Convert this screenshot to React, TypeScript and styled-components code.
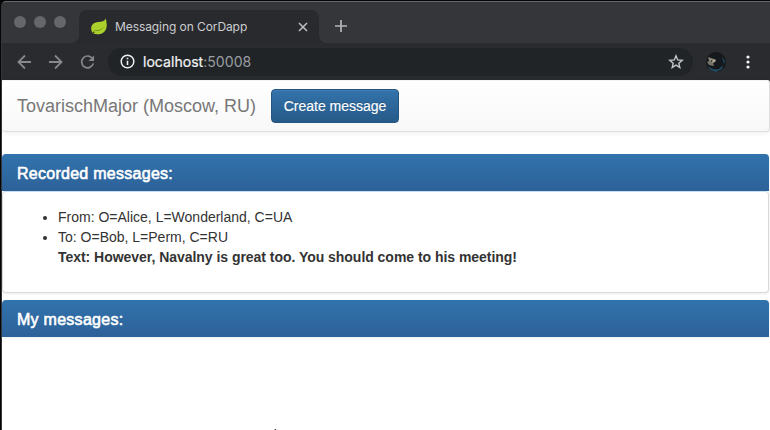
import React from "react";
import styled, { createGlobalStyle } from "styled-components";

const GlobalStyle = createGlobalStyle`
  * { box-sizing: border-box; }
  html, body { margin: 0; background: #000; overflow: hidden; }
  body { font-family: "Liberation Sans", Arial, sans-serif; }
`;

const Window = styled.div`
  height: 430px;
  padding: 1px 0 0 1px;
  background: #050506;
`;

const Frame = styled.div`
  height: 429px;
  display: flex;
  flex-direction: column;
  border-top: 1px solid #66676a;
  border-left: 1px solid #35363a;
  border-radius: 5px 0 0 0;
  background: #35363a;
  overflow: hidden;
`;

const TabStrip = styled.div`
  height: 41px;
  flex: none;
  display: flex;
  align-items: flex-start;
`;

const Lights = styled.div`
  display: flex;
  gap: 8px;
  padding: 14px 0 0 12px;
  width: 69px;
`;

const Light = styled.span`
  width: 12px;
  height: 12px;
  border-radius: 50%;
  background: #66676a;
`;

const Flare = styled.div<{ $side: "left" | "right" }>`
  width: 8px;
  height: 41px;
  background: radial-gradient(
    circle at ${(p) => (p.$side === "left" ? "0 33px" : "8px 33px")},
    #35363a 7.5px,
    #292a2d 8.5px
  );
  clip-path: inset(33px 0 0 0);
`;

const Tab = styled.div`
  width: 240px;
  height: 41px;
  margin-top: 8px;
  padding: 0 10px 8px 12px;
  display: flex;
  align-items: center;
  border-radius: 8px 8px 0 0;
  background: #292a2d;
`;

const TabTitle = styled.span`
  flex: 1;
  margin-left: 8px;
  font: 400 12px/18px Inter, Roboto, sans-serif;
  letter-spacing: -0.08px;
  color: #cbcdd0;
  white-space: nowrap;
`;

const NewTab = styled.div`
  margin: 17px 0 0 7px;
  display: flex;
`;

const Toolbar = styled.div`
  height: 37px;
  flex: none;
  display: flex;
  align-items: center;
  padding: 0 20px 0 14px;
  background: #292b2e;
`;

const NavIcons = styled.div`
  display: flex;
  gap: 17px;
  width: 92px;
`;

const AddressBar = styled.div`
  flex: 1;
  height: 28px;
  display: flex;
  align-items: center;
  padding: 0 9px 0 12px;
  border-radius: 14px;
  background: #202427;
`;

const Url = styled.span`
  flex: 1;
  margin-left: 8px;
  font: 400 14.1px/20px Inter, Roboto, sans-serif;
  color: #9a9da1;
`;

const Host = styled.span`
  color: #f1f3f4;
  -webkit-text-stroke: 0.2px #f1f3f4;
`;

const Actions = styled.div`
  display: flex;
  align-items: center;
  gap: 20px;
  margin-left: 13px;
`;

const Page = styled.main`
  flex: 1;
  min-height: 0;
  display: flex;
  flex-direction: column;
  margin-left: -1px;
  padding-left: 1px;
  background: #fff;
  border-radius: 2px 3px 0 0;
`;

const Navbar = styled.header`
  height: 52px;
  flex: none;
  display: flex;
  align-items: center;
  gap: 15px;
  padding: 0 15px;
  border: 1px solid #dedede;
  border-top-color: #f3f3f3;
  border-left: 0;
  border-radius: 4px;
  background: linear-gradient(#fff, #f8f8f8);
  box-shadow: 0 1px 5px rgba(0, 0, 0, 0.075);
`;

const Brand = styled.span`
  width: 239px;
  font-size: 18px;
  line-height: 20px;
  color: #777;
  white-space: nowrap;
`;

const CreateButton = styled.button`
  width: 128px;
  height: 34px;
  padding: 0;
  border: 1px solid #245580;
  border-radius: 4px;
  background: linear-gradient(#3373ac, #265a88);
  box-shadow: inset 0 1px 0 rgba(255, 255, 255, 0.08);
  color: #fff;
  font: 400 14px/20px "Liberation Sans", Arial, sans-serif;
  text-shadow: 0 -1px 0 rgba(0, 0, 0, 0.2);
  -webkit-text-stroke: 0.15px #fff;
`;

const Panel = styled.section<{ $gap: number; $height: number }>`
  flex: none;
  width: 767px;
  height: ${(p) => p.$height}px;
  margin-top: ${(p) => p.$gap}px;
  border-radius: 4px;
  box-shadow: 0 1px 3px rgba(0, 0, 0, 0.08);
`;

const PanelHeading = styled.h3`
  height: 37px;
  margin: 0;
  padding: 0 15px;
  border-radius: 4px 4px 0 0;
  background: linear-gradient(#3173ad, #2d6198);
  color: #fff;
  font-size: 16px;
  font-weight: 400;
  line-height: 39px;
  letter-spacing: 0.27px;
  -webkit-text-stroke: 0.6px #fff;
`;

const PanelBody = styled.div`
  height: 102px;
  padding: 15px 15px 0;
  border: 1px solid #d8d8d8;
  border-top-color: #c9ddf0;
  border-radius: 4px;
`;

const MessageList = styled.ul`
  margin: 0;
  padding-left: 40px;
  font-size: 14px;
  line-height: 20px;
  color: #333;
`;

const MessageLine = styled.li`
  white-space: nowrap;
`;

const MessageText = styled.strong`
  display: block;
  letter-spacing: -0.035px;
`;

const NextPage = styled.div`
  width: 2px;
  height: 1px;
  margin: auto 0 0 272px;
  background: linear-gradient(to right, #bbb 50%, #444 50%);
`;

function Leaf() {
  return (
    <svg width="16" height="17" viewBox="0 0 16 17">
      <path d="M14.7.6C13.5 3.4 11 4 7.2 4.1 2.4 4.4-.1 7.3.2 11c.2 2 .9 3.4 2.3 4.6 2.8 1 8.2 1.1 11.1-2.2 2.9-3.2 2.4-8.4 1.1-12.8Z" fill="#abd02b" />
      <path d="M15 5.2c-1.2 4-4.2 6.2-8.7 7.1-1.6.3-2.6.4-3.4.8 4.9.2 9.6-1.2 12.1-7.9Z" fill="#4c7622" />
      <circle cx="2.7" cy="14.4" r=".8" fill="#35441c" />
    </svg>
  );
}

function Arrow({ forward = false }: { forward?: boolean }) {
  return (
    <svg width="15" height="16" viewBox="0 0 15 16" fill="none" stroke="#85878b" strokeWidth="1.8">
      <path d={forward ? "M1 8h12M7 1.5 13.5 8 7 14.5" : "M15 8H3M9 1.5 2.5 8 9 14.5"} />
    </svg>
  );
}

function Reload() {
  return (
    <svg width="15" height="16" viewBox="0 0 16 16">
      <path d="M13.7 5A6.3 6.3 0 1 0 14.2 9.5" fill="none" stroke="#85878b" strokeWidth="1.8" />
      <path d="M15 1v6H9Z" fill="#85878b" />
    </svg>
  );
}

function Info() {
  return (
    <svg width="15" height="15" viewBox="0 0 15 15">
      <circle cx="7.5" cy="7.5" r="6.3" fill="none" stroke="#eeeff1" strokeWidth="1.5" />
      <path d="M7.5 6.7v4.3M7.5 3.7v1.5" stroke="#eeeff1" strokeWidth="1.6" />
    </svg>
  );
}

function Star() {
  return (
    <svg width="16" height="16" viewBox="0 0 16 16">
      <path d="m8 1.8 1.7 4.1 4.5.4-3.4 2.9 1 4.4L8 11.2l-3.8 2.4 1-4.4-3.4-2.9 4.5-.4Z" fill="none" stroke="#c4c6ca" strokeWidth="1.4" />
    </svg>
  );
}

function Avatar() {
  return (
    <svg width="20" height="20" viewBox="0 0 20 20">
      <circle cx="10" cy="10" r="10" fill="#15191d" />
      <path d="M2 5 7 6.5 9 9l-2 2 1 3-5-1-2-3 2-1Z" fill="#77756a" />
      <path d="m3 6 3 2 3-1 1 2-3 2-2-2Z" fill="#b1a894" />
      <path d="M2 14c3 3 7 4 11 3l4-4-1 4-6 3-6-2ZM16 5l3 4-1 3Z" fill="#234b62" />
      <path d="m5 8 2 1-2 1Z" fill="#22272a" />
    </svg>
  );
}

function More() {
  return (
    <svg width="4" height="14" viewBox="0 0 4 14" fill="#f1f3f4">
      <circle cx="2" cy="2" r="1.6" />
      <circle cx="2" cy="7" r="1.6" />
      <circle cx="2" cy="12" r="1.6" />
    </svg>
  );
}

export default function App() {
  return (
    <>
      <GlobalStyle />
      <Window>
        <Frame>
          <TabStrip>
            <Lights>
              <Light />
              <Light />
              <Light />
            </Lights>
            <Flare $side="left" />
            <Tab>
              <Leaf />
              <TabTitle>Messaging on CorDapp</TabTitle>
              <svg width="12" height="12" viewBox="0 0 12 12" stroke="#bfc1c4" strokeWidth="1.5">
                <path d="m2 2 8 8M10 2l-8 8" />
              </svg>
            </Tab>
            <Flare $side="right" />
            <NewTab>
              <svg width="14" height="14" viewBox="0 0 14 14" stroke="#b3b5b8" strokeWidth="1.7">
                <path d="M1 7h12M7 1v12" />
              </svg>
            </NewTab>
          </TabStrip>
          <Toolbar>
            <NavIcons>
              <Arrow />
              <Arrow forward />
              <Reload />
            </NavIcons>
            <AddressBar>
              <Info />
              <Url>
                <Host>localhost</Host>:50008
              </Url>
              <Star />
            </AddressBar>
            <Actions>
              <Avatar />
              <More />
            </Actions>
          </Toolbar>
          <Page>
            <Navbar>
              <Brand>TovarischMajor (Moscow, RU)</Brand>
              <CreateButton>Create message</CreateButton>
            </Navbar>
            <Panel $gap={22} $height={139}>
              <PanelHeading>Recorded messages:</PanelHeading>
              <PanelBody>
                <MessageList>
                  <MessageLine>From: O=Alice, L=Wonderland, C=UA</MessageLine>
                  <MessageLine>
                    To: O=Bob, L=Perm, C=RU
                    <MessageText>
                      Text: However, Navalny is great too. You should come to his meeting!
                    </MessageText>
                  </MessageLine>
                </MessageList>
              </PanelBody>
            </Panel>
            <Panel $gap={7} $height={37}>
              <PanelHeading>My messages:</PanelHeading>
            </Panel>
            <NextPage />
          </Page>
        </Frame>
      </Window>
    </>
  );
}
